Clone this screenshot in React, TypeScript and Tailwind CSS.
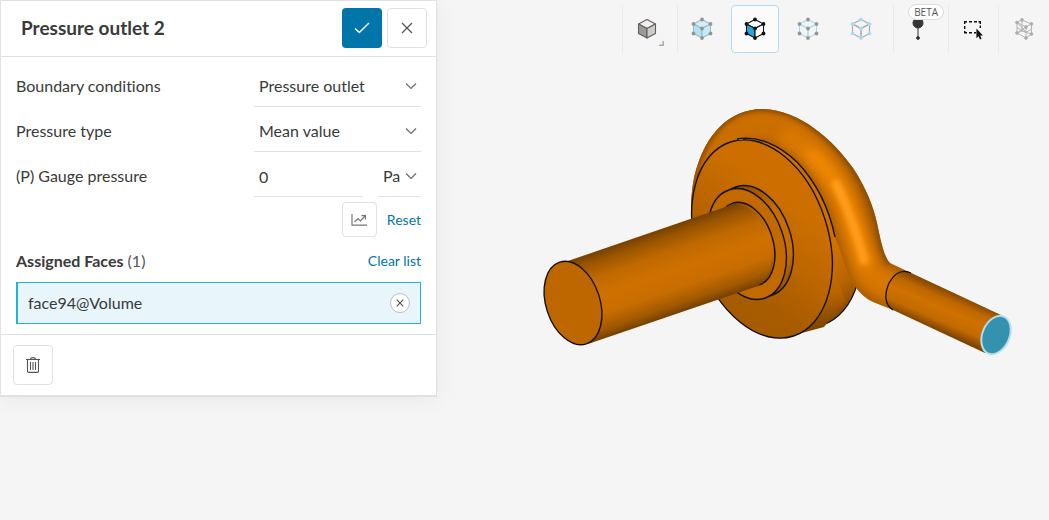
import React from 'react';

type SelectProps = {
  id: string;
  options: string[];
};

const Chevron: React.FC<{ className: string }> = ({ className }) => (
  <svg className={className} width="12" height="12" viewBox="0 0 12 12" fill="none" stroke="#6b6b6b" strokeWidth="1.2">
    <path d="M1 3.5 L6 8.5 L11 3.5" />
  </svg>
);

const SelectField: React.FC<SelectProps> = ({ id, options }) => (
  <div className="relative w-[167px] border-b border-[#e1e1e1]">
    <select id={id} className="h-10 w-full appearance-none bg-transparent pl-[5px] pr-6 outline-none">
      {options.map((option) => (
        <option key={option}>{option}</option>
      ))}
    </select>
    <Chevron className="pointer-events-none absolute right-1 top-3.5" />
  </div>
);

const SettingsPanel: React.FC = () => (
  <aside className="w-[437px] shrink-0 self-start border border-b-2 border-[#e1e1e1] bg-white shadow-[0_2px_20px_rgba(0,0,0,0.06)]">
    <header className="flex items-center gap-[5px] border-b border-[#e1e1e1] pb-2 pl-5 pr-[9px] pt-[7px]">
      <h1 className="flex-1 text-[19px] font-bold">Pressure outlet 2</h1>
      <button aria-label="Apply" className="flex size-10 items-center justify-center rounded bg-[#0075a9]">
        <svg width="16" height="16" viewBox="0 0 16 16" fill="none" stroke="#fff" strokeWidth="1.5">
          <path d="M1 8.5 L5.3 12.5 L15 3" />
        </svg>
      </button>
      <button aria-label="Close" className="flex size-10 items-center justify-center rounded border border-[#e1e1e1]">
        <svg width="12" height="12" viewBox="0 0 12 12" stroke="#555" strokeWidth="1.3">
          <path d="M1 1 L11 11 M11 1 L1 11" />
        </svg>
      </button>
    </header>

    <div className="px-[15px] pb-[10px] pt-[5px]">
      <div className="flex h-[45px] items-end justify-between">
        <label htmlFor="condition" className="flex h-[42px] items-center">Boundary conditions</label>
        <SelectField id="condition" options={['Pressure outlet', 'Pressure inlet', 'Velocity inlet']} />
      </div>
      <div className="flex h-[45px] items-end justify-between">
        <label htmlFor="type" className="flex h-[42px] items-center">Pressure type</label>
        <SelectField id="type" options={['Mean value', 'Fixed value']} />
      </div>
      <div className="flex h-[45px] items-end">
        <label htmlFor="pressure" className="flex h-[42px] flex-1 items-center">(P) Gauge pressure</label>
        <input
          id="pressure"
          type="text"
          defaultValue="0"
          className="mr-[15px] h-10 w-[109px] border-b border-[#e1e1e1] pl-[5px] outline-none"
        />
        <div className="relative w-[43px] border-b border-[#e1e1e1]">
          <select aria-label="Pressure unit" className="h-10 w-full appearance-none bg-transparent pl-[5px] outline-none">
            <option>Pa</option>
            <option>bar</option>
          </select>
          <Chevron className="pointer-events-none absolute right-1 top-3.5" />
        </div>
      </div>

      <div className="mt-[5px] flex items-center justify-end gap-[10px]">
        <button aria-label="Define by table" className="flex size-[35px] items-center justify-center rounded border border-[#e1e1e1]">
          <svg width="16" height="14" viewBox="0 0 16 14" fill="none" stroke="#777" strokeWidth="1.2">
            <path d="M1 1 V12.2 H16 M3.5 9 L7 5.5 L9.5 8 L14 3 M10.5 2.6 H14.4 V6.5" />
          </svg>
        </button>
        <a href="#reset" className="text-sm text-[#0075a9]">Reset</a>
      </div>

      <div className="mt-3 flex h-6 items-center justify-between">
        <h2><span className="font-bold">Assigned Faces</span> <span className="text-[#555]">(1)</span></h2>
        <a href="#clear" className="text-sm text-[#0075a9]">Clear list</a>
      </div>
      <div className="mt-[9px] flex h-[42px] items-center justify-between border border-l-2 border-[#22b1de] bg-[#e8f5fb] pl-[10px] pr-[10px]">
        <span>face94@Volume</span>
        <button aria-label="Remove face94@Volume" className="flex size-5 items-center justify-center rounded-full border border-[#bdbdbd] bg-white">
          <svg width="8" height="8" viewBox="0 0 8 8" stroke="#555" strokeWidth="1.2">
            <path d="M.7 .7 L7.3 7.3 M7.3 .7 L.7 7.3" />
          </svg>
        </button>
      </div>
    </div>

    <footer className="border-t border-[#e1e1e1] px-3 py-[10px]">
      <button aria-label="Delete" className="flex size-10 items-center justify-center rounded border border-[#e1e1e1]">
        <svg width="14" height="16" viewBox="0 0 14 16" fill="none" stroke="#555" strokeWidth="1.1">
          <path d="M0 2.5 H14 M4.5 2.5 Q4.5 .6 7 .6 Q9.5 .6 9.5 2.5 M1.5 2.5 V14 Q1.5 15.4 2.5 15.4 H11.5 Q12.5 15.4 12.5 14 V2.5 M4.5 5 V13 M7 5 V13 M9.5 5 V13" />
        </svg>
      </button>
    </footer>
  </aside>
);

type CubeProps = {
  line: string;
  node?: string;
  top?: string;
  left?: string;
  right?: string;
};

const NODES = [[12, 2.5], [3.5, 7], [20.5, 7], [12, 11.5], [3.5, 16.5], [20.5, 16.5], [12, 21]];

const Cube: React.FC<CubeProps> = ({ line, node, top = 'none', left = 'none', right = 'none' }) => (
  <svg width="24" height="24" viewBox="0 0 24 24" stroke={line} strokeWidth="1.1" strokeLinejoin="round">
    <path d="M12 2.5 L20.5 7 L12 11.5 L3.5 7 Z" fill={top} />
    <path d="M3.5 7 L12 11.5 V21 L3.5 16.5 Z" fill={left} />
    <path d="M20.5 7 L12 11.5 V21 L20.5 16.5 Z" fill={right} />
    {node && NODES.map(([x, y]) => <circle key={`${x}-${y}`} cx={x} cy={y} r="1.9" fill={node} stroke="none" />)}
  </svg>
);

const ToolButton: React.FC<{ label: string; active?: boolean; children: React.ReactNode }> = ({ label, active, children }) => (
  <button
    aria-label={label}
    className={
      active
        ? 'relative flex size-12 items-center justify-center rounded border border-[#b3dcee] bg-[#fbfbfb]'
        : 'relative flex size-12 items-center justify-center rounded'
    }
  >
    {children}
  </button>
);

const Toolbar: React.FC = () => (
  <nav className="flex justify-end pt-[5px]">
    <div className="flex border-l border-[#e9e9e9] pr-1.5">
      <ToolButton label="Shaded view">
        <Cube line="#62605d" top="#f0f0f0" left="#9d9a94" right="#cbcbcb" />
        <svg className="absolute bottom-[7px] right-[7px]" width="5" height="5" viewBox="0 0 5 5" fill="none" stroke="#aaa" strokeWidth="1.5">
          <path d="M4.2 0 V4.2 H0" />
        </svg>
      </ToolButton>
    </div>
    <div className="flex gap-[5px] border-l border-[#e9e9e9] pr-2">
      <ToolButton label="Select volumes">
        <Cube line="#9bbdcb" node="#97948f" top="#d5edf8" left="#b4e0f4" right="#c6e8f7" />
      </ToolButton>
      <ToolButton label="Select faces" active>
        <Cube line="#111" node="#111" top="#fff" left="#1eabdc" right="#fff" />
      </ToolButton>
      <ToolButton label="Select edges">
        <Cube line="#a5dbf1" node="#999692" />
      </ToolButton>
      <ToolButton label="Select vertices">
        <Cube line="#aaa" node="#aadcf2" />
      </ToolButton>
    </div>
    <div className="flex border-l border-[#e9e9e9] pr-1.5">
      <ToolButton label="Probe point, beta">
        <svg width="12" height="24" viewBox="0 0 12 24" fill="#353535" stroke="#353535">
          <circle cx="6" cy="6" r="5" />
          <path d="M6 10 V21" />
          <circle cx="6" cy="21" r="1.4" />
        </svg>
        <span className="absolute -right-0.5 -top-px rounded-full border border-[#dcdcdc] bg-white px-[5px] font-['Open_Sans',sans-serif] text-[10px] leading-[14px] text-[#555]">
          BETA
        </span>
      </ToolButton>
    </div>
    <div className="flex border-l border-[#e9e9e9] pr-px">
      <ToolButton label="Box selection">
        <svg width="20" height="22" viewBox="0 0 20 22">
          <path d="M1.7 6 V3.7 H4 M6 3.7 H9 M11 3.7 H14 M15.5 3.7 H17.3 V6 M17.3 7.5 V10 M1.7 8 V11 M1.7 13 V14.8 H4 M6 14.8 H9 M11 14.8 H13" fill="none" stroke="#111" strokeWidth="1.4" />
          <path d="M13.4 10.5 V20.2 L15.5 18.2 L17 21.5 L18.6 20.7 L17.2 17.6 H20 Z" fill="#111" />
        </svg>
      </ToolButton>
    </div>
    <div className="flex border-l border-[#e9e9e9] pl-px pr-px">
      <ToolButton label="Mesh view">
        <svg width="20" height="24" viewBox="0 0 20 24" fill="#a8a8a8" stroke="#b5b5b5" strokeWidth="1">
          <path d="M8 3 L17.5 7 V17 L12 21 L3 16 V5.5 Z M3 5.5 L12 10 L17.5 7 M12 10 V21 M8 3 V14 L3 16 M8 14 L17.5 17 M3 10.5 L12 15.5 L17.5 12 M3 5.5 L12 15 M12 10 L3 16" fill="none" />
          <circle cx="8" cy="3" r="1.4" />
          <circle cx="17.5" cy="7" r="1.4" />
          <circle cx="3" cy="5.5" r="1.4" />
          <circle cx="12" cy="10" r="1.4" />
          <circle cx="3" cy="16" r="1.4" />
          <circle cx="12" cy="21" r="1.4" />
          <circle cx="17.5" cy="17" r="1.4" />
        </svg>
      </ToolButton>
    </div>
  </nav>
);

const PIPE =
  'M691 213 C691 190 694 175 698 164 C706 140 725 109 763 109 C800 110 833 140 853 168 C866 188 873 205 877 223 C881 242 884 257 890 263 L909 272 L893 310 L873 302 C860 296 851 284 845 264 L835 237 C829 210 815 180 795 161 C778 145 760 137 745 138 C715 142 697 175 691 213 Z';

const PIPE_EDGE = 'M691 213 C691 190 694 175 698 164 C706 140 725 109 763 109 C800 110 833 140 853 168 C866 188 873 205 877 223 C881 242 884 257 890 263';

const PIPE_CENTER = 'M690 200 C697 150 725 122 762 123 C800 126 829 164 843 198 C853 224 858 250 868 271 C874 282 888 287 910 294';

// Pump housing with inlet shaft on the left and outlet pipe on the right
const Model: React.FC = () => (
  <svg className="w-full" viewBox="437 53 612 467" fill="none" role="img" aria-label="Pump volume">
    <defs>
      <linearGradient id="shaft" gradientUnits="userSpaceOnUse" x1="650" y1="234" x2="677" y2="313">
        <stop offset="0" stopColor="#7a4300" />
        <stop offset="0.1" stopColor="#9a5500" />
        <stop offset="0.28" stopColor="#bf6900" />
        <stop offset="0.5" stopColor="#cf7100" />
        <stop offset="0.72" stopColor="#c86d00" />
        <stop offset="0.9" stopColor="#a25900" />
        <stop offset="1" stopColor="#774200" />
      </linearGradient>
      <linearGradient id="outlet" gradientUnits="userSpaceOnUse" x1="950" y1="292" x2="934" y2="329">
        <stop offset="0" stopColor="#8a4b00" />
        <stop offset="0.2" stopColor="#bd6700" />
        <stop offset="0.45" stopColor="#d07100" />
        <stop offset="0.75" stopColor="#c26a00" />
        <stop offset="1" stopColor="#7d4400" />
      </linearGradient>
      <linearGradient id="disk" gradientUnits="userSpaceOnUse" x1="690" y1="225" x2="770" y2="170">
        <stop offset="0" stopColor="#9c5500" />
        <stop offset="0.5" stopColor="#bb6500" />
        <stop offset="1" stopColor="#cc6f00" />
      </linearGradient>
      <linearGradient id="diskLow" gradientUnits="userSpaceOnUse" x1="810" y1="250" x2="735" y2="325">
        <stop offset="0" stopColor="#cb6e00" stopOpacity="0" />
        <stop offset="1" stopColor="#a85c00" stopOpacity="0.8" />
      </linearGradient>
      <linearGradient id="rim" gradientUnits="userSpaceOnUse" x1="832" y1="260" x2="846" y2="325">
        <stop offset="0" stopColor="#cf7000" />
        <stop offset="0.5" stopColor="#b86400" />
        <stop offset="1" stopColor="#794200" />
      </linearGradient>
      <linearGradient id="hubSide" gradientUnits="userSpaceOnUse" x1="735" y1="188" x2="785" y2="295">
        <stop offset="0" stopColor="#844800" />
        <stop offset="0.4" stopColor="#c96d00" />
        <stop offset="0.75" stopColor="#c96d00" />
        <stop offset="1" stopColor="#844800" />
      </linearGradient>
      <filter id="soft" filterUnits="userSpaceOnUse" x="660" y="80" width="280" height="260">
        <feGaussianBlur stdDeviation="4" />
      </filter>
      <filter id="glow" filterUnits="userSpaceOnUse" x="660" y="80" width="280" height="260">
        <feGaussianBlur stdDeviation="2" />
      </filter>
      <clipPath id="pipeClip">
        <path d={PIPE} />
      </clipPath>
    </defs>

    {/* housing side */}
    <ellipse cx="791" cy="228" rx="66" ry="102" transform="rotate(-18 791 228)" fill="url(#rim)" stroke="#111" strokeWidth="1.3" />
    <path d="M783 338 L824 327 L845 300 L832 265 Z" fill="url(#rim)" />

    {/* volute */}
    <path d={PIPE} fill="#a85c00" />
    <g clipPath="url(#pipeClip)">
      <path d={PIPE_CENTER} stroke="#ca6e00" strokeWidth="32" filter="url(#soft)" />
      <path d="M790 138 C810 148 830 172 844 200 C855 224 859 250 868 270 C874 281 888 284 915 296" stroke="#d97800" strokeWidth="20" strokeLinecap="round" filter="url(#soft)" />
      <path d="M812 155 C830 171 843 192 850 214 L865 262" stroke="#ee8600" strokeWidth="14" strokeLinecap="round" filter="url(#soft)" />
      <path d="M836 184 C846 204 855 228 864 260" stroke="#ff9b1b" strokeWidth="9" strokeLinecap="round" filter="url(#glow)" />
      <path d={PIPE_EDGE} stroke="#8a4b00" strokeWidth="5" filter="url(#glow)" />
    </g>

    {/* housing front with its lip */}
    <path d="M737 139 C757 135 779 145 797 162 C816 182 829 208 835 237" stroke="#111" strokeWidth="1.4" />
    <ellipse cx="762" cy="239" rx="66" ry="102" transform="rotate(-18 762 239)" fill="url(#disk)" />
    <ellipse cx="762" cy="239" rx="66" ry="102" transform="rotate(-18 762 239)" fill="url(#diskLow)" stroke="#111" strokeWidth="1.4" />

    {/* hub */}
    <ellipse cx="754" cy="241" rx="37" ry="57" transform="rotate(-18 754 241)" fill="url(#hubSide)" stroke="#111" strokeWidth="1.4" />
    <ellipse cx="747" cy="244" rx="37" ry="57" transform="rotate(-18 747 244)" fill="#c26900" stroke="#111" strokeWidth="1.4" />

    {/* shaft */}
    <ellipse cx="746" cy="244" rx="27" ry="43" transform="rotate(-18 746 244)" fill="url(#shaft)" stroke="#111" strokeWidth="1.4" />
    <path d="M562 263 L734 204 Q762 208 769 235 Q778 268 758 286 L588 344 Z" fill="url(#shaft)" />
    <ellipse cx="573" cy="303" rx="27" ry="43" transform="rotate(-18 573 303)" fill="#be6700" stroke="#111" strokeWidth="1.4" />

    {/* outlet pipe */}
    <path d="M907 271 L1001 315 L985 353 L893 310 Q882 303 887 289 Q893 274 907 271 Z" fill="url(#outlet)" />
    <path d="M911 273 Q898 267 889 283 Q881 302 893 310" stroke="#111" strokeWidth="1.3" />
    <ellipse cx="996" cy="335" rx="13.5" ry="20" transform="rotate(23 996 335)" fill="#3592ae" stroke="#b5dcef" strokeWidth="2" />
  </svg>
);

const App: React.FC = () => {
  return (
    <div className="flex min-h-screen bg-[#f5f5f5] font-['Lato',sans-serif] text-base text-[#3a3a3a] [font-variant-ligatures:none]">
      <SettingsPanel />
      <main className="flex min-w-0 flex-1 flex-col">
        <Toolbar />
        <Model />
      </main>
    </div>
  );
};

export default App;
